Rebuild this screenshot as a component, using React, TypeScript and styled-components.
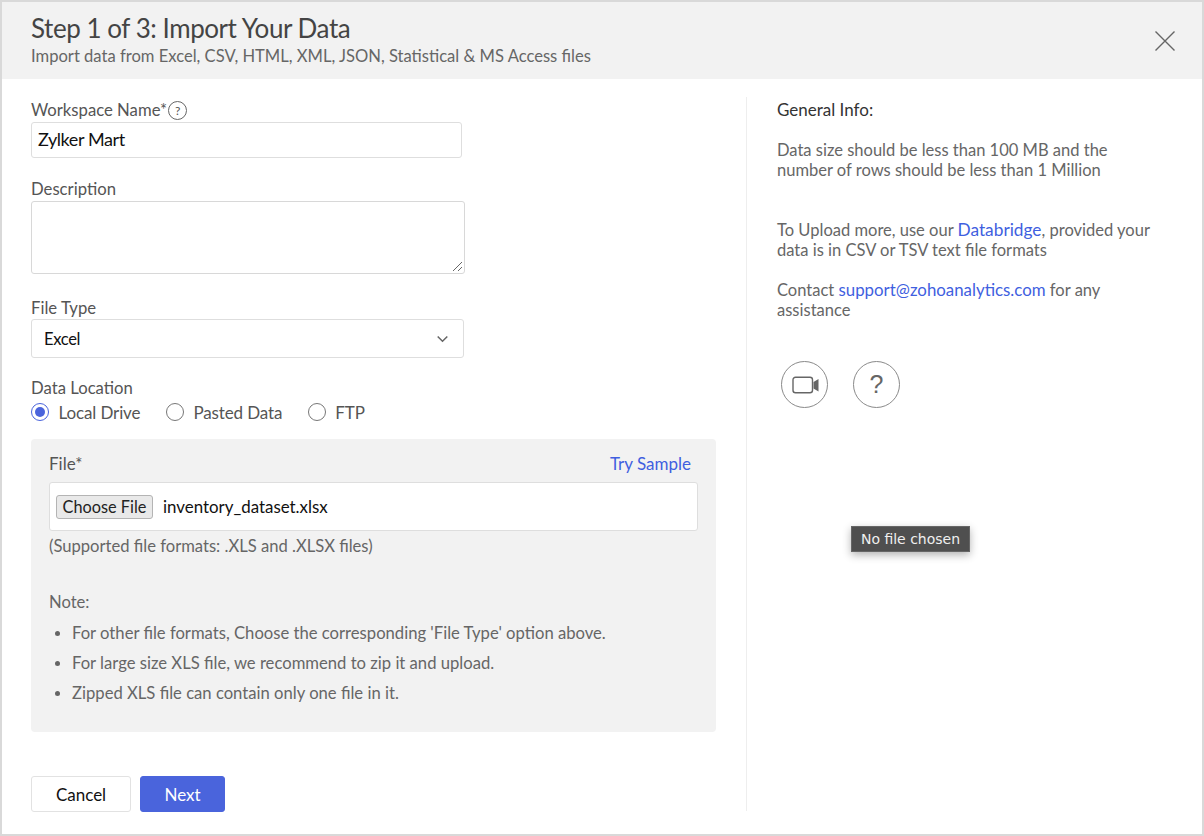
import React from "react";
import styled, { createGlobalStyle } from "styled-components";

const Global = createGlobalStyle`
  html, body { margin: 0; padding: 0; background: #fff; }
  body { font-family: Lato, "Liberation Sans", sans-serif; }
  * { box-sizing: border-box; }
`;

const Frame = styled.div`
  position: relative;
  width: 1204px;
  height: 836px;
  border: 2px solid #d9d9d9;
  background: #fff;
  display: flex;
  flex-direction: column;
  overflow: hidden;
`;
const Header = styled.header`
  height: 77px;
  flex: none;
  background: #f2f2f2;
  padding: 11px 27px 0 29px;
  display: flex;
  justify-content: space-between;
  align-items: flex-start;
`;
const Title = styled.h1`
  margin: 0;
  font-size: 26px;
  line-height: 31px;
  font-weight: 400;
  letter-spacing: -0.45px;
  color: #444;
`;
const Subtitle = styled.p`
  margin: 0;
  font-size: 16.58px;
  line-height: 24px;
  color: #666;
`;
const CloseButton = styled.button`
  border: 0;
  background: none;
  padding: 0;
  margin-top: 18px;
  width: 20px;
  height: 20px;
  display: block;
`;
const Body = styled.main`
  flex: 1;
  display: flex;
  padding-top: 18px;
`;
const Left = styled.section`
  width: 745px;
  flex: none;
  height: 714px;
  padding-left: 29px;
  border-right: 1px solid #eeeeee;
`;
const Label = styled.label<{ $top?: number }>`
  margin-top: ${(p) => p.$top ?? 0}px;
  padding-top: 2px;
  font-size: 16.7px;
  line-height: 23px;
  height: 25px;
  color: #555;
  display: flex;
  align-items: center;
  gap: 1px;
`;
const TextInput = styled.div`
  width: 431px;
  height: 36px;
  border: 1px solid #dedede;
  border-radius: 3px;
  padding: 0 6px;
  font-size: 18px;
  line-height: 33px;
  letter-spacing: -0.4px;
  color: #111;
`;
const TextArea = styled.div`
  position: relative;
  width: 434px;
  height: 73px;
  border: 1px solid #d8d8d8;
  border-radius: 3px;
`;
const Grip = styled.svg`
  position: absolute;
  right: 1px;
  bottom: 1px;
`;
const Select = styled.div`
  width: 433px;
  height: 39px;
  margin-top: -1px;
  border: 1px solid #dedede;
  border-radius: 3px;
  padding: 0 15px 0 12px;
  font-size: 16.5px;
  letter-spacing: -0.3px;
  color: #111;
  display: flex;
  align-items: center;
  justify-content: space-between;
`;
const RadioRow = styled.div`
  display: flex;
  height: 24px;
  align-items: center;
  gap: 25.5px;
`;
const RadioItem = styled.span`
  display: flex;
  align-items: center;
  gap: 9.5px;
  font-size: 17px;
  letter-spacing: -0.12px;
  color: #555;
`;
const RadioDot = styled.span<{ $on?: boolean }>`
  width: 18px;
  height: 18px;
  border-radius: 50%;
  border: 1px solid ${(p) => (p.$on ? "#4a64dc" : "#777")};
  display: flex;
  align-items: center;
  justify-content: center;
  &::after {
    content: "";
    width: 10px;
    height: 10px;
    border-radius: 50%;
    background: ${(p) => (p.$on ? "#4a64dc" : "transparent")};
  }
`;
const Panel = styled.div`
  margin-top: 15px;
  width: 685px;
  height: 293px;
  background: #f2f2f2;
  border-radius: 4px;
  padding: 12px 18px 0;
`;
const PanelHead = styled.div`
  display: flex;
  justify-content: space-between;
  height: 25px;
  line-height: 25px;
  font-size: 17px;
  color: #555;
  padding-right: 7px;
`;
const LinkText = styled.a<{ $size?: number }>`
  color: #3f5fe0;
  text-decoration: none;
  font-size: ${(p) => p.$size ?? 17}px;
`;
const FileBox = styled.div`
  margin-top: 6px;
  width: 649px;
  height: 49px;
  background: #fff;
  border: 1px solid #dedede;
  border-radius: 3px;
  padding: 0 6px;
  display: flex;
  align-items: center;
  gap: 10px;
  font-size: 16.9px;
  color: #111;
`;
const ChooseFile = styled.span`
  width: 97px;
  height: 24px;
  border: 1px solid #b4b4b4;
  border-radius: 3px;
  background: #e9e9e9;
  display: flex;
  align-items: center;
  justify-content: center;
  font-size: 16.3px;
  color: #222;
`;
const Hint = styled.p`
  margin: 3px 0 0;
  font-size: 16.6px;
  line-height: 24px;
  color: #666;
`;
const NoteTitle = styled.p`
  margin: 32px 0 0;
  font-size: 16.6px;
  line-height: 24px;
  color: #666;
`;
const NoteList = styled.ul`
  margin: 4px 0 0;
  padding: 0 0 0 23px;
  list-style: disc;
`;
const NoteItem = styled.li`
  height: 30px;
  font-size: 16.65px;
  line-height: 30px;
  color: #666;
  &::marker { font-size: 15px; }
`;
const Actions = styled.div`
  margin-top: 44px;
  display: flex;
  gap: 9px;
`;
const Button = styled.button<{ $primary?: boolean }>`
  height: 36px;
  width: ${(p) => (p.$primary ? 85 : 100)}px;
  border-radius: 3px;
  border: 1px solid ${(p) => (p.$primary ? "#4a64dc" : "#e2e2e2")};
  background: ${(p) => (p.$primary ? "#4a64dc" : "#fff")};
  color: ${(p) => (p.$primary ? "#fff" : "#111")};
  font-family: inherit;
  font-size: 17px;
`;
const Right = styled.aside`
  flex: 1;
  padding-left: 30px;
`;
const InfoTitle = styled.h2`
  margin: 0;
  font-size: 17px;
  line-height: 25px;
  font-weight: 400;
  color: #333;
`;
const InfoText = styled.p<{ $top: number }>`
  margin: ${(p) => p.$top}px 0 0;
  width: 385px;
  font-size: 16.52px;
  line-height: 20px;
  color: #666;
`;
const IconRow = styled.div`
  margin-top: 41px;
  margin-left: 4px;
  display: flex;
  gap: 25px;
`;
const IconCircle = styled.span`
  width: 47px;
  height: 47px;
  border: 1px solid #8a8a8a;
  border-radius: 50%;
  display: flex;
  align-items: center;
  justify-content: center;
  font-size: 25px;
  color: #666;
  font-family: "Liberation Sans", sans-serif;
`;
const HelpDot = styled.span`
  width: 19px;
  height: 19px;
  border: 1px solid #666;
  border-radius: 50%;
  display: inline-flex;
  align-items: center;
  justify-content: center;
  font-size: 12px;
  color: #555;
`;
const Tooltip = styled.div`
  position: absolute;
  left: 849px;
  top: 524px;
  width: 119px;
  height: 26px;
  background: #4f4f4f;
  border: 1px solid #666;
  color: #f0f0f0;
  font-family: "DejaVu Sans", sans-serif;
  font-size: 14px;
  line-height: 24px;
  text-align: center;
  box-shadow: 0 3px 8px rgba(0, 0, 0, 0.3);
`;

export default function App() {
  return (
    <Frame>
      <Global />
      <Header>
        <div>
          <Title>Step 1 of 3: Import Your Data</Title>
          <Subtitle>Import data from Excel, CSV, HTML, XML, JSON, Statistical &amp; MS Access files</Subtitle>
        </div>
        <CloseButton aria-label="Close">
          <svg width="20" height="20" viewBox="0 0 20 20" fill="none" stroke="#666" strokeWidth="1.4">
            <path d="M.5.5 19.5 19.5M19.5.5 .5 19.5" />
          </svg>
        </CloseButton>
      </Header>
      <Body>
        <Left>
          <Label>Workspace Name*<HelpDot>?</HelpDot></Label>
          <TextInput>Zylker Mart</TextInput>
          <Label $top={18}>Description</Label>
          <TextArea>
            <Grip width="12" height="12" viewBox="0 0 12 12" fill="none" stroke="#666" strokeWidth="1">
              <path d="M2 11 11 2M7 11 11 7" />
            </Grip>
          </TextArea>
          <Label $top={21}>File Type</Label>
          <Select>
            Excel
            <svg width="11" height="8" viewBox="0 0 11 8" fill="none" stroke="#666" strokeWidth="1.5">
              <path d="M.7 1.5 5.5 6.3 10.3 1.5" />
            </svg>
          </Select>
          <Label $top={17}>Data Location</Label>
          <RadioRow>
            <RadioItem><RadioDot $on />Local Drive</RadioItem>
            <RadioItem><RadioDot />Pasted Data</RadioItem>
            <RadioItem><RadioDot />FTP</RadioItem>
          </RadioRow>
          <Panel>
            <PanelHead>
              <span>File*</span>
              <LinkText>Try Sample</LinkText>
            </PanelHead>
            <FileBox>
              <ChooseFile>Choose File</ChooseFile>
              inventory_dataset.xlsx
            </FileBox>
            <Hint>(Supported file formats: .XLS and .XLSX files)</Hint>
            <NoteTitle>Note:</NoteTitle>
            <NoteList>
              <NoteItem>For other file formats, Choose the corresponding 'File Type' option above.</NoteItem>
              <NoteItem>For large size XLS file, we recommend to zip it and upload.</NoteItem>
              <NoteItem>Zipped XLS file can contain only one file in it.</NoteItem>
            </NoteList>
          </Panel>
          <Actions>
            <Button>Cancel</Button>
            <Button $primary>Next</Button>
          </Actions>
        </Left>
        <Right>
          <InfoTitle>General Info:</InfoTitle>
          <InfoText $top={18}>Data size should be less than 100 MB and the number of rows should be less than 1 Million</InfoText>
          <InfoText $top={40}>To Upload more, use our <LinkText $size={17.3}>Databridge</LinkText>, provided your data is in CSV or TSV text file formats</InfoText>
          <InfoText $top={20}>Contact <LinkText $size={16.85}>support@zohoanalytics.com</LinkText> for any assistance</InfoText>
          <IconRow>
            <IconCircle>
              <svg width="28" height="18" viewBox="0 0 28 18" fill="none">
                <rect x="2" y="1.3" width="19.5" height="15.4" rx="2.5" stroke="#666" strokeWidth="1.4" />
                <path d="M22.5 6 27.5 3V15.5L22.5 12.5Z" fill="#666" />
              </svg>
            </IconCircle>
            <IconCircle>?</IconCircle>
          </IconRow>
        </Right>
      </Body>
      <Tooltip>No file chosen</Tooltip>
    </Frame>
  );
}
